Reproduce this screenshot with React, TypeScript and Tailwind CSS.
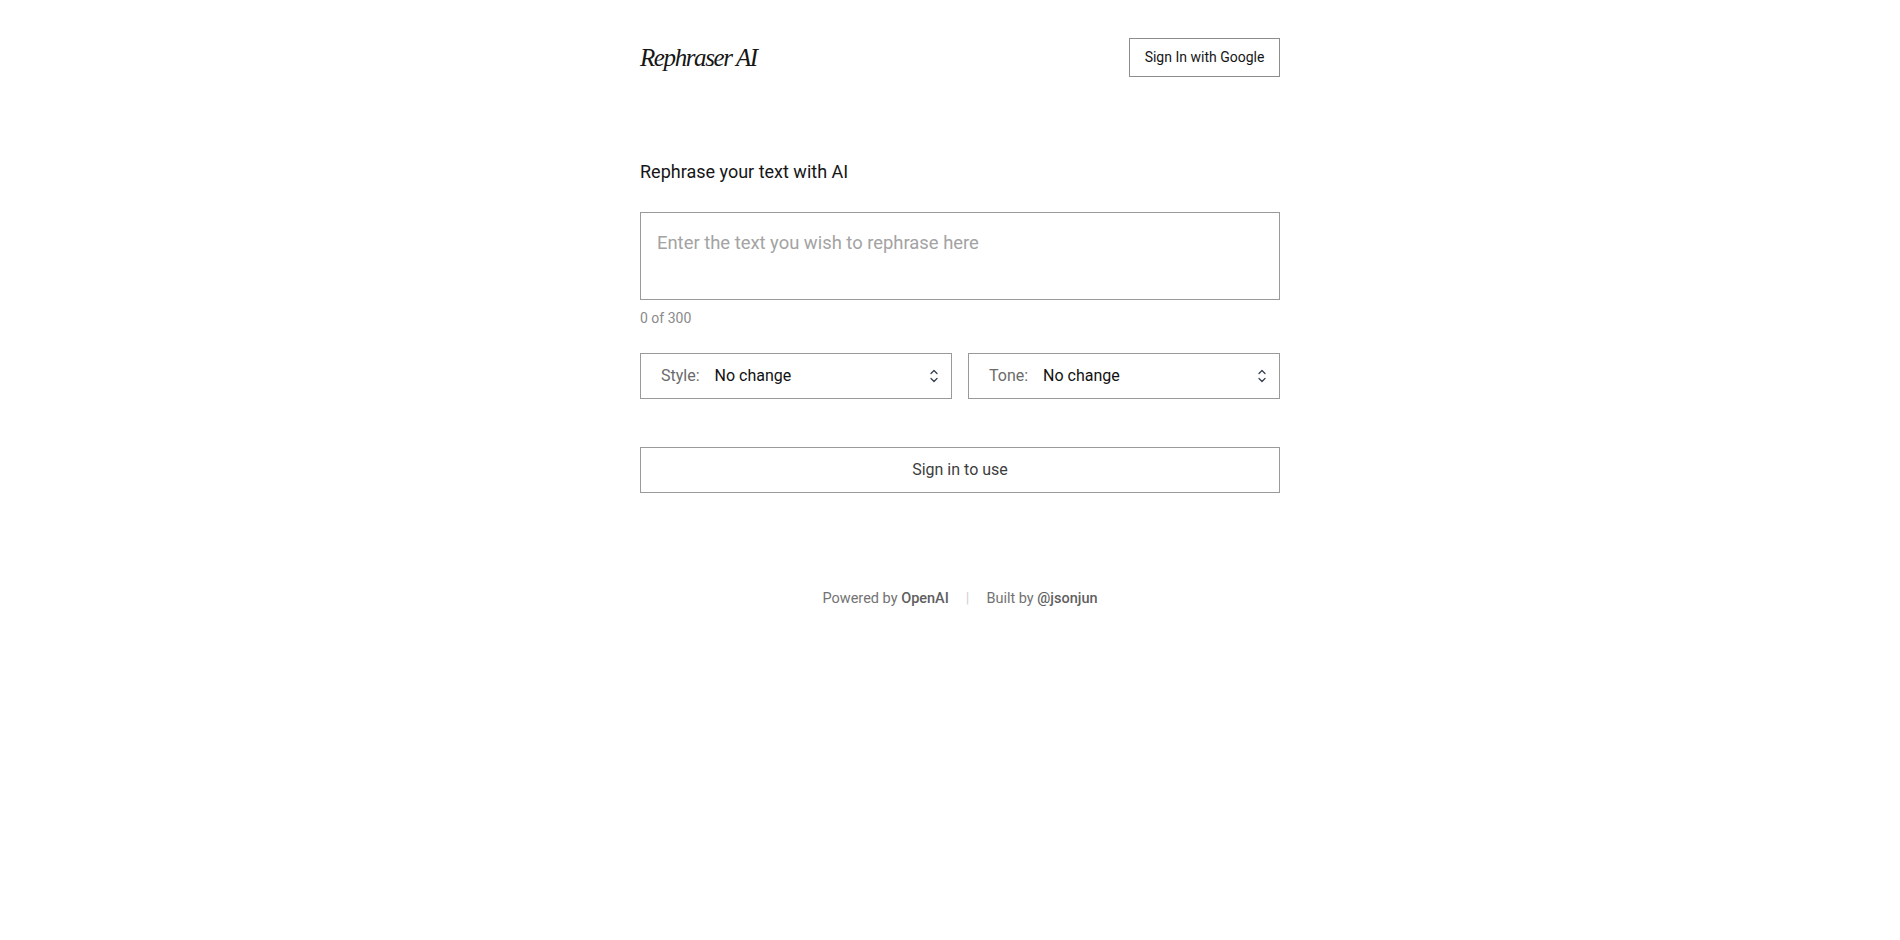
import React, { useState } from 'react';

const UpDown = () => (
  <svg width="10" height="16" viewBox="0 0 10 16" fill="none" stroke="#374151" strokeWidth="1.3" strokeLinecap="round" strokeLinejoin="round">
    <path d="M2 5.5 L5 2.5 L8 5.5" />
    <path d="M2 10.5 L5 13.5 L8 10.5" />
  </svg>
);

const SelectBox = ({ label, value }: { label: string; value: string }) => (
  <div className="flex h-[46px] flex-1 items-center border border-[#9a9a9a] bg-white pl-[20px] pr-[12px]">
    <span className="text-[16px] text-[#6b6b6b]">{label}</span>
    <span className="ml-[15px] text-[16px] text-[#111]">{value}</span>
    <span className="ml-auto flex items-center">
      <UpDown />
    </span>
  </div>
);

export default function App() {
  const [text, setText] = useState('');

  return (
    <div className="min-h-screen bg-white font-['Roboto','Liberation_Sans',sans-serif] text-[#161616]">
      <div className="mx-auto w-[660px] pl-[20px]">
        <header className="flex h-[114px] items-start justify-between pt-[38px]">
          <div className="pt-[7px] font-['Liberation_Serif',serif] text-[25px] italic leading-none tracking-[-1.4px] text-[#161616]">
            Rephraser AI
          </div>
          <button className="h-[39px] w-[151px] border border-[#8d8d8d] bg-white text-[14px] text-[#161616]">
            Sign In with Google
          </button>
        </header>

        <main>
          <h1 className="mt-[46px] text-[18px] leading-[24px] text-[#161616]">Rephrase your text with AI</h1>

          <textarea
            value={text}
            onChange={(e) => setText(e.target.value.slice(0, 300))}
            placeholder="Enter the text you wish to rephrase here"
            className="mt-[28px] block h-[88px] w-full resize-none border border-[#9a9a9a] px-[16px] pt-[18px] pb-[16px] text-[18.4px] leading-[24px] text-[#161616] outline-none placeholder:text-[#a3a3a3]"
          />
          <div className="mt-[8px] text-[14px] leading-[20px] text-[#8a8a8a]">{text.length} of 300</div>

          <div className="mt-[25px] flex gap-[16px]">
            <SelectBox label="Style:" value="No change" />
            <SelectBox label="Tone:" value="No change" />
          </div>

          <button className="mt-[48px] h-[46px] w-full border border-[#9a9a9a] bg-white text-[16px] text-[#3d3d3d]">
            Sign in to use
          </button>
        </main>

        <footer className="mt-[95px] flex items-center justify-center text-[14.5px] text-[#737373]">
          <span>
            Powered by <span className="font-medium text-[#5f5f5f]">OpenAI</span>
          </span>
          <span className="mx-[17px] text-[#cfcfcf]">|</span>
          <span>
            Built by <span className="font-medium text-[#5f5f5f]">@jsonjun</span>
          </span>
        </footer>
      </div>
    </div>
  );
}
